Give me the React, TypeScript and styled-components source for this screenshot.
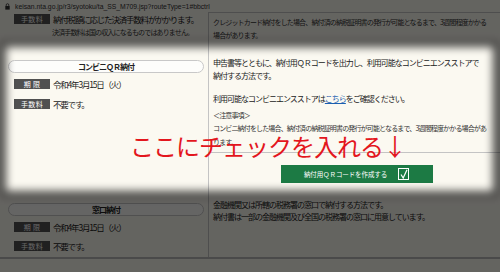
import styled, { createGlobalStyle } from 'styled-components';

const GlobalStyle = createGlobalStyle`
  html, body {
    margin: 0;
    padding: 0;
  }
  body {
    background: #fbf9f1;
    font-family: 'Noto Sans CJK JP', 'Noto Sans', sans-serif;
    color: #333;
  }
  * {
    box-sizing: border-box;
  }
`;

const Screen = styled.div`
  position: relative;
  width: 500px;
  height: 272px;
  overflow: hidden;
  background: #fbf9f1;
`;

const UrlBar = styled.div`
  height: 12px;
  display: flex;
  align-items: center;
  gap: 5px;
  padding-left: 5px;
  font-family: 'Liberation Sans', Arial, sans-serif;
  font-size: 6.8px;
  color: #333;
  white-space: nowrap;
`;

const Row = styled.div<{ $h: number; $last?: boolean }>`
  display: grid;
  grid-template-columns: 208px 1fr;
  height: ${(p) => p.$h}px;
  border-bottom: ${(p) => (p.$last ? '2px solid #b8b8b8' : 'none')};
`;

const LeftCell = styled.div<{ $pt: number }>`
  display: flex;
  flex-direction: column;
  align-items: flex-start;
  padding: ${(p) => p.$pt}px 4px 0 8px;
`;

const RightCell = styled.div<{ $pt: number; $top?: boolean }>`
  border-left: 1px solid #c4c4c4;
  border-top: ${(p) => (p.$top ? '1px solid #c4c4c4' : 'none')};
  padding: ${(p) => p.$pt}px 0 0 4px;
  white-space: nowrap;
`;

const Pill = styled.div`
  align-self: stretch;
  height: 13px;
  border: 1px solid #c8c8c8;
  border-radius: 7px;
  background: #fdfdfb;
  display: flex;
  align-items: center;
  justify-content: center;
  font-size: 8px;
  font-weight: bold;
  letter-spacing: -1px;
  color: #222;
`;

const LabelLine = styled.div<{ $mt: number }>`
  display: flex;
  align-items: center;
  gap: 3px;
  margin: ${(p) => p.$mt}px 0 0 6px;
`;

const Label = styled.span`
  width: 36px;
  height: 10px;
  background: #505050;
  color: #fff;
  font-size: 7px;
  line-height: 10px;
  text-align: center;
  letter-spacing: 0.3px;
`;

const Value = styled.span`
  font-size: 8.5px;
  letter-spacing: -1.2px;
  line-height: 10px;
  color: #222;
`;

const SideNote = styled.div`
  margin: 3px 0 0 44px;
  font-size: 7px;
  letter-spacing: -0.85px;
  line-height: 10px;
`;

const Para = styled.p<{ $mt?: number; $lh?: number }>`
  margin: ${(p) => p.$mt ?? 0}px 0 0;
  font-size: 8px;
  letter-spacing: -1px;
  line-height: ${(p) => p.$lh ?? 13}px;
  color: #222;
`;

const Note = styled.p<{ $mt?: number }>`
  margin: ${(p) => p.$mt ?? 0}px 0 0;
  font-size: 7px;
  letter-spacing: -0.85px;
  line-height: 13.3px;
  color: #333;
`;

const Link = styled.a`
  color: #1b5fb0;
  text-decoration: underline;
`;

const Rule = styled.div`
  height: 1px;
  margin: 3px 0 0 -4px;
  background: #c4c4c4;
`;

const ButtonWrap = styled.div`
  display: flex;
  justify-content: center;
  margin-top: 12px;
`;

const QrButton = styled.div`
  width: 152px;
  height: 18px;
  background: #1c7a44;
  color: #fff;
  display: flex;
  align-items: center;
  justify-content: center;
  gap: 11px;
  font-size: 6.5px;
  letter-spacing: -0.1px;
`;

const CheckBox = styled.span`
  width: 11px;
  height: 12px;
  border: 1px solid #fff;
  display: flex;
  align-items: center;
  justify-content: center;
`;

const Annotation = styled.div`
  position: absolute;
  left: 130px;
  top: 134px;
  font-size: 24px;
  line-height: 24px;
  letter-spacing: -1px;
  color: #e3161d;
  white-space: nowrap;
`;

const Dim = styled.div`
  position: absolute;
  inset: 0;
  overflow: hidden;
  pointer-events: none;
`;

const Spot = styled.div`
  position: absolute;
  left: 6px;
  top: 47px;
  width: 487px;
  height: 144px;
  box-shadow: 0 0 0 6px rgba(0, 0, 0, 0.3), 0 0 0 700px rgba(0, 0, 0, 0.6);
  filter: blur(4px);
`;

function Lock() {
  return (
    <svg width='5' height='7' viewBox='0 0 5 7'>
      <path d='M1.2 3V2a1.3 1.3 0 0 1 2.6 0v1' fill='none' stroke='#333' strokeWidth='0.8' />
      <rect x='0.3' y='3' width='4.4' height='3.6' fill='#333' />
    </svg>
  );
}

function Check() {
  return (
    <svg width='8' height='10' viewBox='0 0 8 10'>
      <path d='M1 5.5 L3.2 9 L7 0.8' fill='none' stroke='#fff' strokeWidth='1.2' />
    </svg>
  );
}

export default function App() {
  return (
    <Screen>
      <GlobalStyle />
      <UrlBar>
        <Lock />
        <span>keisan.nta.go.jp/r3/syotoku/ta_SS_M709.jsp?routeType=1#bbctrl</span>
      </UrlBar>

      <Row $h={38}>
        <LeftCell $pt={2}>
          <LabelLine $mt={0}>
            <Label>手数料</Label>
            <Value>納付税額に応じた決済手数料がかかります。</Value>
          </LabelLine>
          <SideNote>決済手数料は国の収入になるものではありません。</SideNote>
        </LeftCell>
        <RightCell $pt={2.5} $top>
          <Note>
            クレジットカード納付をした場合、納付済の納税証明書の発行が可能となるまで、3週間程度かかる
            <br />
            場合があります。
          </Note>
        </RightCell>
      </Row>

      <Row $h={143}>
        <LeftCell $pt={10}>
          <Pill>コンビニＱＲ納付</Pill>
          <LabelLine $mt={6}>
            <Label>期 限</Label>
            <Value>令和4年3月15日（火）</Value>
          </LabelLine>
          <LabelLine $mt={10}>
            <Label>手数料</Label>
            <Value>不要です。</Value>
          </LabelLine>
        </LeftCell>
        <RightCell $pt={6}>
          <Para>
            申告書等とともに、納付用ＱＲコードを出力し、利用可能なコンビニエンスストアで
            <br />
            納付する方法です。
          </Para>
          <Para $mt={10}>
            利用可能なコンビニエンスストアは<Link>こちら</Link>をご確認ください。
          </Para>
          <Note $mt={4}>
            ＜注意事項＞
            <br />
            コンビニ納付をした場合、納付済の納税証明書の発行が可能となるまで、3週間程度かかる場合があ
            <br />
            ります。
          </Note>
          <Rule />
          <ButtonWrap>
            <QrButton>
              <span>納付用ＱＲコードを作成する</span>
              <CheckBox>
                <Check />
              </CheckBox>
            </QrButton>
          </ButtonWrap>
        </RightCell>
      </Row>

      <Row $h={66} $last>
        <LeftCell $pt={10}>
          <Pill>窓口納付</Pill>
          <LabelLine $mt={6}>
            <Label>期 限</Label>
            <Value>令和4年3月15日（火）</Value>
          </LabelLine>
          <LabelLine $mt={9}>
            <Label>手数料</Label>
            <Value>不要です。</Value>
          </LabelLine>
        </LeftCell>
        <RightCell $pt={6}>
          <Para $lh={12}>
            金融機関又は所轄の税務署の窓口で納付する方法です。
            <br />
            納付書は一部の金融機関及び全国の税務署の窓口に用意しています。
          </Para>
        </RightCell>
      </Row>

      <Annotation>ここにチェックを入れる↓</Annotation>

      <Dim>
        <Spot />
      </Dim>
    </Screen>
  );
}
